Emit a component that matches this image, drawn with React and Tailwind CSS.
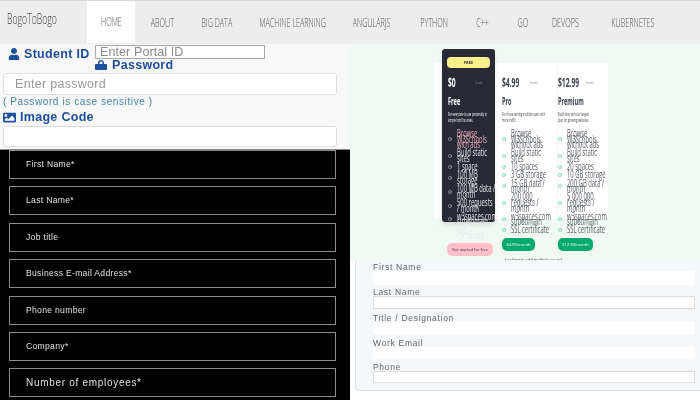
import React from 'react';
import { FaUser, FaImage } from 'react-icons/fa';
import { CircleCheck } from 'lucide-react';

const navItems = [
  { label: 'ABOUT', w: 'w-[54px]' },
  { label: 'BIG DATA', w: 'w-[56px]' },
  { label: 'MACHINE LEARNING', w: 'w-[96px]' },
  { label: 'ANGULARJS', w: 'w-[62px]' },
  { label: 'PYTHON', w: 'w-[62px]' },
  { label: 'C++', w: 'w-[36px]' },
  { label: 'GO', w: 'w-[44px]' },
  { label: 'DEVOPS', w: 'w-[40px]' },
  { label: 'KUBERNETES', w: 'w-[96px]' },
];

const blackFields = ['First Name*', 'Last Name*', 'Job title', 'Business E-mail Address*', 'Phone number', 'Company*'];

const formFields = [
  { label: 'First Name', cls: 'h-[14px] mb-[2px]' },
  { label: 'Last Name', cls: 'h-[13px] mb-[4px] border border-[#dcdcdc]' },
  { label: 'Title / Designation', cls: 'h-[12px] mb-[4px]' },
  { label: 'Work Email', cls: 'h-[12px] mb-[3px]' },
  { label: 'Phone', cls: 'h-[12px] border border-[#dcdcdc]' },
];

const freeList = [['Browse', 'W3Schools', 'with ads'], ['Build static', 'sites'], ['1 space'], ['100 MB', 'storage'], ['100 MB data /', 'month'], ['500 requests', '/ month'], ['w3spaces.com', 'subdomain'], ['SSL', 'certificate']];
const proList = [['Browse', 'W3Schools', 'without ads'], ['Build static', 'sites'], ['10 spaces'], ['3 GB storage'], ['15 GB data /', 'month'], ['200 000', 'requests /', 'month'], ['w3spaces.com', 'subdomain'], ['SSL certificate']];
const premiumList = [['Browse', 'W3Schools', 'without ads'], ['Build static', 'sites'], ['20 spaces'], ['10 GB storage'], ['200 GB data /', 'month'], ['5 000 000', 'requests /', 'month'], ['w3spaces.com', 'subdomain'], ['SSL certificate']];

// text in the pricing table is squeezed sideways, the line keeps its own width
function Narrow({ children, className = '' }) {
  return <span className={`block origin-left scale-x-[0.56] whitespace-nowrap ${className}`}>{children}</span>;
}

function FeatureList({ items, dark }) {
  return (
    <ul className={`flex flex-col gap-[2.6px] text-[10.5px] leading-[5.6px] ${dark ? 'text-[#e8e8ea]' : 'text-[#555a60]'}`}>
      {items.map((lines, i) => (
        <li key={i} className="flex items-center gap-[5px]">
          <CircleCheck size={4} className={`shrink-0 ${dark ? 'text-white' : 'text-[#04aa6d]'}`} />
          <div>
            {lines.map((line) => (
              <Narrow key={line} className={dark && i === 0 ? 'text-[#f0b0be]' : ''}>{line}</Narrow>
            ))}
          </div>
        </li>
      ))}
    </ul>
  );
}

function Plan({ price, name, desc, items, dark }) {
  const sub = dark ? 'text-white' : 'text-[#3a4048]';
  return (
    <>
      <div className={`flex items-center gap-[6px] h-[12px] ${sub}`}>
        <Narrow className="w-[22px] text-[12px] font-bold">{price}</Narrow>
        <Narrow className="text-[4px] text-[#888]">/month</Narrow>
      </div>
      <Narrow className={`mt-[6px] text-[10px] leading-[12px] font-bold ${sub}`}>{name}</Narrow>
      <div className={`mt-[4px] text-[4.5px] leading-[6px] ${sub}`}>
        {desc.map((line) => <Narrow key={line}>{line}</Narrow>)}
      </div>
      <div className="mt-[8px]">
        <FeatureList items={items} dark={dark} />
      </div>
    </>
  );
}

function Pricing() {
  return (
    <div className="h-[216px] shrink-0 bg-[#f0f9f4] pt-[19px] pl-[84px] font-['Open_Sans',sans-serif]">
      <div className="flex h-[156px] w-[174px] rounded-[3px] bg-white">
        <div className="ml-[8px] -mt-[14px] flex w-[53px] flex-col">
          <div className="h-[173px] shrink-0 rounded-[3px] bg-[#282a35] px-[6px] pt-[8px] shadow-md">
            <div className="-mx-[1px] flex h-[11px] items-center justify-center rounded-[4px] bg-[#fff08b] text-[4px] font-bold text-[#282a35]">FREE</div>
            <div className="mt-[9px]">
              <Plan price="$0" name="Free" desc={['For everyone to use personally in', 'simple html/css sites.']} items={freeList} dark />
            </div>
          </div>
          <div className="mt-[21px] ml-[5px] flex h-[13px] w-[46px] shrink-0 items-center justify-center rounded-[5px] bg-[#ffc0c7] text-[4px] text-[#282a35]">
            Get started for free
          </div>
        </div>
        <div className="ml-[6px] flex w-[56px] flex-col pt-[14px] pl-[1px]">
          <Plan price="$4.99" name="Pro" desc={['For those serving multiple users with', 'more traffic.']} items={proList} />
          <div className="mt-[5px] flex h-[13px] w-[33px] shrink-0 items-center justify-center rounded-[5px] bg-[#04aa6d] text-[4px] text-white">$4.99/month</div>
        </div>
        <div className="flex w-[51px] flex-col border-l border-[#f3f3f3] pt-[14px]">
          <Plan price="$12.99" name="Premium" desc={['Build sites with our largest', 'plan for growing websites.']} items={premiumList} />
          <div className="mt-[5px] flex h-[13px] w-[35px] shrink-0 items-center justify-center rounded-[5px] bg-[#04aa6d] text-[4px] text-white">$12.99/month</div>
        </div>
      </div>
      <div className="mt-[38px] ml-[71px] text-[4px] leading-[5px] text-[#282a35]">Looking to add multiple users?</div>
    </div>
  );
}

export default function App() {
  return (
    <div className="h-[400px] w-[700px] overflow-hidden bg-white font-['Liberation_Sans',sans-serif] blur-[0.5px]">
      {/* Nav */}
      <div className="flex h-[44px] items-stretch border-t border-[#d8d8d8] bg-[#ededed] text-[12px] font-light text-[#555]">
        <div className="flex w-[87px] items-center pl-[7px] pb-[8px] text-[#444]">
          <span className="origin-left scale-x-[0.62] whitespace-nowrap font-['Open_Sans',sans-serif] text-[14px]">BogoToBogo</span>
        </div>
        <div className="mb-[1px] flex w-[48px] items-center justify-center bg-white">
          <span className="scale-x-[0.6] font-['Open_Sans',sans-serif]">HOME</span>
        </div>
        {navItems.map((item) => (
          <div key={item.label} className={`flex items-center justify-center ${item.w}`}>
            <span className="scale-x-[0.6] whitespace-nowrap font-['Open_Sans',sans-serif]">{item.label}</span>
          </div>
        ))}
      </div>

      <div className="flex h-[356px]">
        {/* Left column */}
        <div className="flex w-[350px] flex-col">
          <div className="h-[105px] bg-[#f8f8f8] px-[3px] text-[#1c4f9c]">
            <div className="flex items-start">
              <div className="ml-[5px] mt-[4px] flex w-[87px] items-center gap-[4px] text-[12.5px] leading-[12px] font-bold tracking-[0.3px]">
                <FaUser size={12} />
                <span className="whitespace-nowrap">Student ID</span>
              </div>
              <div>
                <div className="mt-[1px] flex h-[14px] w-[170px] items-center border border-[#aaa] bg-white pl-[4px] text-[12.5px] tracking-[0.1px] text-[#8a8a8a]">Enter Portal ID</div>
                <div className="flex items-center gap-[5px] text-[12.5px] leading-[12px] font-bold tracking-[0.3px]">
                  <svg width="12" height="10" viewBox="0 0 12 10" fill="currentColor">
                    <path d="M3 4V2.8C3 1.2 4.3 0 6 0s3 1.2 3 2.8V4h-1.5V2.8C7.500 2 6.800 1.400 6 1.400S4.500 2 4.500 2.800V4z" />
                    <rect x="0" y="4" width="12" height="6" rx="1" />
                  </svg>
                  <span>Password</span>
                </div>
              </div>
            </div>
            <div className="mt-[2px] flex h-[22px] w-[334px] items-center rounded-[3px] border border-[#dedede] bg-white pl-[11px] text-[12.5px] tracking-[0.3px] text-[#999]">Enter password</div>
            <div className="mt-[1px] text-[10px] leading-[12px] tracking-[0.6px] text-[#4383ad]">( Password is case sensitive )</div>
            <div className="mt-[2px] flex items-center gap-[4px] text-[12.5px] leading-[15px] font-bold tracking-[0.3px]">
              <FaImage size={13} />
              <span>Image Code</span>
            </div>
            <div className="mt-[1px] h-[21px] w-[334px] rounded-[3px] border border-[#dedede] bg-white" />
          </div>
          <div className="flex-1 border-t border-[#888] bg-black px-[9px] text-[8.6px] text-[#e0e0e0]">
            <div className="flex w-[327px] flex-col gap-[7.4px]">
              {blackFields.map((label) => (
                <div key={label} className="flex h-[29px] items-center border border-[#8c8c8c] pl-[16px] tracking-[0.3px]">{label}</div>
              ))}
              <div className="flex h-[29px] items-center border border-[#8c8c8c] pl-[16px] text-[10px] tracking-[0.7px]">Number of employees*</div>
            </div>
          </div>
        </div>

        {/* Right column */}
        <div className="flex w-[350px] flex-col">
          <Pricing />
          <div className="ml-[5px] h-[131px] rounded-bl-[4px] border-b border-l border-[#dfe5e9] bg-[#f4f8fb] pl-[17px] pr-[5px] pt-[2px]">
            {formFields.map((f) => (
              <div key={f.label}>
                <div className="h-[9px] text-[8.5px] leading-[10px] tracking-[0.7px] text-[#666]">{f.label}</div>
                <div className={`bg-white ${f.cls}`} />
              </div>
            ))}
          </div>
        </div>
      </div>
    </div>
  );
}
